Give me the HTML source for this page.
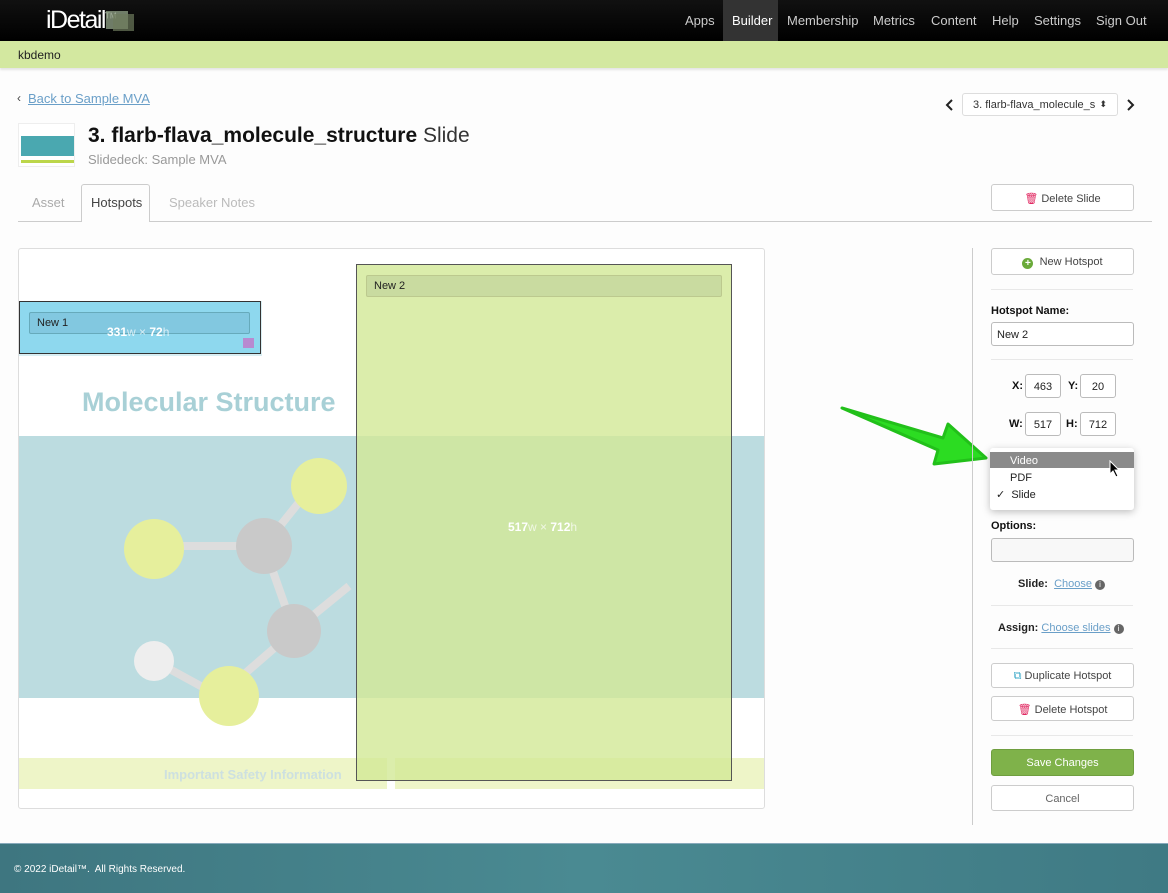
<!DOCTYPE html>
<html><head><meta charset="utf-8"><style>
*{box-sizing:border-box;margin:0;padding:0}
body{width:1168px;height:893px;position:relative;background:#fdfdfd;font-family:"Liberation Sans",sans-serif;overflow:hidden;color:#222}
.a{position:absolute}
.nav{left:0;top:0;width:1168px;height:41px;background:linear-gradient(#111,#000)}
.nav span{position:absolute;top:13px;color:#ccc;font-size:13px}
.btn{position:absolute;border:1px solid #ccc;border-radius:3px;background:#fff;font-size:11px;color:#444;text-align:center}
.inp{position:absolute;border:1px solid #bbb;border-radius:3px;background:#fff;font-size:11px}
.lbl{position:absolute;font-size:11px;font-weight:bold;color:#111}
.sep{position:absolute;left:991px;width:142px;height:1px;background:#e8e8e8}
a{color:#6a9fc8;text-decoration:underline}
</style></head><body>
<div class="a nav">
<div class="a" style="left:46px;top:6px;color:#fff;font-size:25px;letter-spacing:-1.5px;white-space:nowrap">iDetail<sup style="font-size:8px;letter-spacing:0">TM</sup></div>
<div class="a" style="left:106px;top:11px;width:22px;height:18px;background:#8a9a80;opacity:.8"></div>
<div class="a" style="left:113px;top:14px;width:21px;height:17px;background:#6d7a5c;opacity:.7"></div>
<div class="a" style="left:723px;top:0;width:55px;height:41px;background:#333"></div>
<span style="left:685px">Apps</span><span style="left:732px;color:#fff">Builder</span><span style="left:787px">Membership</span><span style="left:873px">Metrics</span><span style="left:931px">Content</span><span style="left:992px">Help</span><span style="left:1034px">Settings</span><span style="left:1096px">Sign Out</span>
</div>
<div class="a" style="left:0;top:41px;width:1168px;height:27px;background:#d3e8a0;box-shadow:0 2px 2px rgba(0,0,0,.1)"></div>
<div class="a" style="left:18px;top:48px;font-size:12px">kbdemo</div>
<div class="a" style="left:17px;top:91px;font-size:12px;color:#444">‹</div>
<div class="a" style="left:28px;top:91px;font-size:13px"><a>Back to Sample MVA</a></div>
<div class="a" style="left:18px;top:123px;width:57px;height:44px;border:1px solid #eee;background:#fff">
<div class="a" style="left:2px;top:12px;width:53px;height:20px;background:#4aa8b0"></div>
<div class="a" style="left:2px;top:36px;width:53px;height:3px;background:#bcd64a"></div></div>
<div class="a" style="left:88px;top:124px;font-size:21px;font-weight:bold;color:#111;white-space:nowrap">3. flarb-flava_molecule_structure <span style="font-weight:normal;color:#333">Slide</span></div>
<div class="a" style="left:88px;top:152px;font-size:13px;color:#999">Slidedeck: Sample MVA</div>
<svg class="a" style="left:945px;top:98px" width="10" height="14"><path d="M7 2L2 7L7 12" stroke="#222" stroke-width="2" fill="none"/></svg>
<div class="inp" style="left:962px;top:93px;width:156px;height:23px;border-color:#ddd;padding:5px 10px;color:#333">3. flarb-flava_molecule_s <span style="float:right;font-size:9px">⬍</span></div>
<svg class="a" style="left:1125px;top:98px" width="10" height="14"><path d="M3 2L8 7L3 12" stroke="#222" stroke-width="2" fill="none"/></svg>
<div class="a" style="left:18px;top:221px;width:1134px;height:1px;background:#ccc"></div>
<div class="a" style="left:32px;top:195px;font-size:13px;color:#aaa">Asset</div>
<div class="a" style="left:81px;top:184px;width:69px;height:38px;border:1px solid #ccc;border-bottom:none;border-radius:3px 3px 0 0;background:#fdfdfd"></div>
<div class="a" style="left:91px;top:195px;font-size:13px;color:#444">Hotspots</div>
<div class="a" style="left:169px;top:195px;font-size:13px;color:#bbb">Speaker Notes</div>
<div class="btn" style="left:991px;top:184px;width:143px;height:27px;padding-top:7px"><span style="color:#e0245e">🗑</span> Delete Slide</div>

<div class="a" style="left:18px;top:248px;width:747px;height:561px;border:1px solid #ddd;border-radius:3px;background:#fff;overflow:hidden">
<div class="a" style="left:0;top:52px;width:243px;height:55px;background:#d8eef3"></div>
<div class="a" style="left:63px;top:138px;font-size:27px;font-weight:bold;color:#a8d0d6;white-space:nowrap">Molecular Structure</div>
<div class="a" style="left:0;top:187px;width:747px;height:262px;background:#bcdce0"></div>
<svg class="a" style="left:0;top:187px" width="747" height="330">
<g stroke="#ddd" stroke-width="8" fill="none"><path d="M140 110L245 110L285 60M245 110L275 195L330 150M275 195L200 260L145 230"/></g>
<circle cx="135" cy="113" r="30" fill="#e6ef9c"/><circle cx="300" cy="50" r="28" fill="#e6ef9c"/>
<circle cx="245" cy="110" r="28" fill="#c9c9c9"/><circle cx="275" cy="195" r="27" fill="#c9c9c9"/>
<circle cx="210" cy="260" r="30" fill="#e6ef9c"/><circle cx="135" cy="225" r="20" fill="#eee"/>
</svg>
<div class="a" style="left:0;top:509px;width:368px;height:31px;background:#eef5c8;padding:9px 0 0 145px;font-size:13px;font-weight:bold;color:#cde0e0;white-space:nowrap">Important Safety Information</div>
<div class="a" style="left:376px;top:509px;width:371px;height:31px;background:#eef5c8"></div>
<div class="a" style="left:0px;top:52px;width:242px;height:53px;background:#8ed8ee;border:1px solid #333"></div>
<div class="a" style="left:10px;top:63px;width:221px;height:22px;background:#82c8e0;border:1px solid #6ab;border-radius:2px;font-size:11px;padding:4px 7px">New 1</div>
<div class="a" style="left:88px;top:76px;font-size:12px;color:#fff;font-weight:bold">331<span style="font-weight:normal;opacity:.7">w × </span>72<span style="font-weight:normal;opacity:.7">h</span></div>
<div class="a" style="left:224px;top:89px;width:11px;height:10px;background:#b88ad0"></div>
<div class="a" style="left:337px;top:15px;width:376px;height:517px;background:rgba(210,232,150,.8);border:1px solid #555"></div>
<div class="a" style="left:347px;top:26px;width:356px;height:22px;background:#c9dba0;border:1px solid #bcc98e;border-radius:2px;font-size:11px;padding:4px 7px">New 2</div>
<div class="a" style="left:489px;top:271px;font-size:12px;color:#fff;font-weight:bold">517<span style="font-weight:normal;opacity:.7">w × </span>712<span style="font-weight:normal;opacity:.7">h</span></div>
</div>

<svg class="a" style="left:838px;top:400px" width="155" height="70"><path d="M4 8L105 38L110 24L148 58L96 64L100 50Z" fill="#2cdc22" stroke="#22c01a" stroke-width="3" stroke-linejoin="round"/></svg>

<div class="a" style="left:972px;top:248px;width:1px;height:577px;background:#ccc"></div>
<div class="btn" style="left:991px;top:248px;width:143px;height:27px;padding-top:7px"><span style="display:inline-block;width:11px;height:11px;border-radius:50%;background:#6aaa3a;color:#fff;font-size:10px;line-height:11px;font-weight:bold;vertical-align:-1px">+</span>&nbsp; New Hotspot</div>
<div class="sep" style="top:289px"></div>
<div class="lbl" style="left:991px;top:305px">Hotspot Name:</div>
<div class="inp" style="left:991px;top:322px;width:143px;height:24px;padding:6px 5px">New 2</div>
<div class="sep" style="top:359px"></div>
<div class="lbl" style="left:1012px;top:380px">X:</div><div class="inp" style="left:1025px;top:374px;width:36px;height:24px;text-align:center;padding-top:6px">463</div>
<div class="lbl" style="left:1068px;top:380px">Y:</div><div class="inp" style="left:1080px;top:374px;width:36px;height:24px;text-align:center;padding-top:6px">20</div>
<div class="lbl" style="left:1009px;top:418px">W:</div><div class="inp" style="left:1025px;top:412px;width:36px;height:24px;text-align:center;padding-top:6px">517</div>
<div class="lbl" style="left:1066px;top:418px">H:</div><div class="inp" style="left:1080px;top:412px;width:36px;height:24px;text-align:center;padding-top:6px">712</div>
<div class="a" style="left:990px;top:448px;width:144px;height:62px;background:#fff;box-shadow:0 2px 8px rgba(0,0,0,.25);border-radius:3px;font-size:11px">
<div style="margin-top:4px;height:16px;background:#8a8a8a;color:#fff;padding:3px 20px">Video</div>
<div style="height:18px;padding:4px 20px">PDF</div>
<div style="height:18px;padding:2px 6px">✓&nbsp; Slide</div></div>
<svg class="a" style="left:1109px;top:460px" width="12" height="18"><path d="M1 1L1 14L4 11L7 17L9 16L6 10L10 10Z" fill="#000" stroke="#fff" stroke-width="1"/></svg>
<div class="lbl" style="left:991px;top:520px">Options:</div>
<div class="inp" style="left:991px;top:538px;width:143px;height:24px;background:#f8f8f8"></div>
<div class="a" style="left:1018px;top:578px;font-size:11px"><b>Slide:</b>&nbsp; <a>Choose</a> <span style="display:inline-block;width:10px;height:10px;border-radius:50%;background:#666;color:#fff;font-size:8px;text-align:center;line-height:10px">i</span></div>
<div class="sep" style="top:605px"></div>
<div class="a" style="left:998px;top:622px;font-size:11px"><b>Assign:</b> <a>Choose slides</a> <span style="display:inline-block;width:10px;height:10px;border-radius:50%;background:#666;color:#fff;font-size:8px;text-align:center;line-height:10px">i</span></div>
<div class="sep" style="top:648px"></div>
<div class="btn" style="left:991px;top:663px;width:143px;height:25px;padding-top:6px"><span style="color:#3aa8c8">⧉</span> Duplicate Hotspot</div>
<div class="btn" style="left:991px;top:696px;width:143px;height:25px;padding-top:6px"><span style="color:#e0245e">🗑</span> Delete Hotspot</div>
<div class="sep" style="top:735px"></div>
<div class="btn" style="left:991px;top:749px;width:143px;height:27px;padding-top:7px;background:#7fb24a;border-color:#6f9e3f;color:#fff">Save Changes</div>
<div class="btn" style="left:991px;top:785px;width:143px;height:26px;padding-top:7px;color:#666">Cancel</div>

<div class="a" style="left:0;top:843px;width:1168px;height:50px;background:linear-gradient(90deg,#3e7680,#4a8a92 50%,#3f7a84);border-top:1px solid #8ab"></div>
<div class="a" style="left:14px;top:864px;font-size:10px;color:#fff">© 2022 iDetail™.&nbsp; All Rights Reserved.</div>
</body></html>
